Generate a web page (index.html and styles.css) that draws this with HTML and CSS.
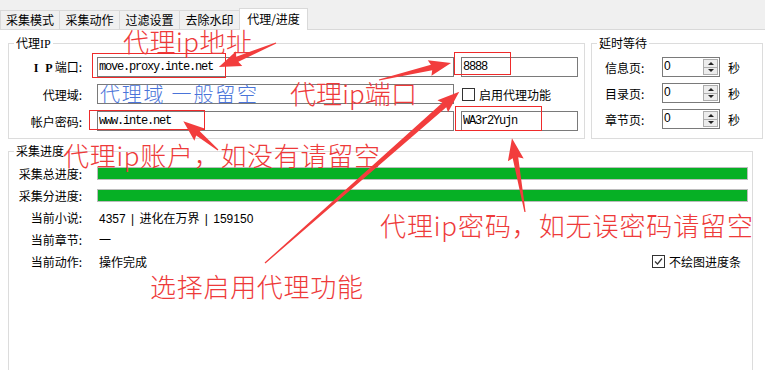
FILE: index.html
```html
<!DOCTYPE html>
<html lang="zh-CN">
<head>
    <meta charset="UTF-8">
    <meta name="viewport" content="width=device-width, initial-scale=1.0">
    <title>代理/进度</title>
    <link rel="stylesheet" href="styles.css">
</head>
<body>
    <div class="tabs">
        <div class="tab first">采集模式</div>
        <div class="tab">采集动作</div>
        <div class="tab">过滤设置</div>
        <div class="tab last">去除水印</div>
        <div class="tab active">代理/进度</div>
    </div>

    <div class="panel">
        <div class="top-row">
            <fieldset class="group proxy">
                <legend>代理<span class="serif">IP</span></legend>
                <div class="proxy-grid">
                    <label class="lbl"><b class="ip">I P</b>端口:</label>
                    <input class="box" type="text" value="move.proxy.inte.net">
                    <input class="box" type="text" value="8888">

                    <label class="lbl">代理域:</label>
                    <input class="box" type="text" value="">
                    <label class="check enable"><span class="cb"></span>启用代理功能</label>

                    <label class="lbl">帐户密码:</label>
                    <input class="box" type="text" value="www.inte.net">
                    <input class="box" type="text" value="WA3r2Yujn">
                </div>
            </fieldset>

            <fieldset class="group delay">
                <legend>延时等待</legend>
                <div class="delay-grid">
                    <span class="lbl">信息页:</span>
                    <div class="spin"><span class="spin-val">0</span><span class="spin-btns"><i class="up"></i><i class="down"></i></span></div>
                    <span class="unit">秒</span>

                    <span class="lbl">目录页:</span>
                    <div class="spin"><span class="spin-val">0</span><span class="spin-btns"><i class="up"></i><i class="down"></i></span></div>
                    <span class="unit">秒</span>

                    <span class="lbl">章节页:</span>
                    <div class="spin"><span class="spin-val">0</span><span class="spin-btns"><i class="up"></i><i class="down"></i></span></div>
                    <span class="unit">秒</span>
                </div>
            </fieldset>
        </div>

        <fieldset class="group progress">
            <legend>采集进度</legend>
            <div class="progress-grid">
                <span class="lbl">采集总进度:</span>
                <div class="bar"><div class="fill" style="width:100%"></div></div>

                <span class="lbl">采集分进度:</span>
                <div class="bar"><div class="fill" style="width:100%"></div></div>

                <span class="lbl">当前小说:</span>
                <span class="val">4357 | 进化在万界 | 159150</span>

                <span class="lbl">当前章节:</span>
                <span class="val">一</span>

                <span class="lbl">当前动作:</span>
                <div class="val last-row">
                    <span>操作完成</span>
                    <label class="check nodraw">
                        <span class="cb checked"><svg width="11" height="11" viewBox="0 0 11 11"><polyline points="2,5.5 4.5,8 9,2.5" fill="none" stroke="#333" stroke-width="1.2"/></svg></span>不绘图进度条
                    </label>
                </div>
            </div>
        </fieldset>
    </div>

    <!-- red/blue notes drawn over the dialog -->
    <svg class="notes" width="765" height="370" viewBox="0 0 765 370">
        <g class="marks">
            <rect x="92.5" y="53.5" width="133" height="24"/>
            <rect x="89.5" y="110.5" width="115" height="19"/>
            <rect x="454.5" y="52.5" width="56" height="22"/>
            <rect x="455.5" y="106.5" width="86" height="24"/>
        </g>
        <g class="arrows">
            <polygon transform="translate(276 43) rotate(157.2)" points="0,-0.6 42,-2.8 40,-8 62,0 40,8 42,2.8 0,0.6"/>
            <polygon transform="translate(379 80) rotate(-13.3)" points="0,-0.6 54,-2.8 52,-8 74,0 52,8 54,2.8 0,0.6"/>
            <polygon transform="translate(265 263) rotate(-41.4)" points="0,-0.6 239,-3 237,-8 259,0 237,8 239,3 0,0.6"/>
            <polygon transform="translate(218 150) rotate(-140.4)" points="0,-0.6 26,-2.8 24,-8 45,0 24,8 26,2.8 0,0.6"/>
            <polygon transform="translate(525 212) rotate(-100)" points="0,-0.6 55,-2.8 53,-8 75,0 53,8 55,2.8 0,0.6"/>
        </g>
        <text class="note" x="123" y="52" textLength="129" lengthAdjust="spacing">代理ip地址</text>
        <text class="note" x="290" y="104" textLength="127" lengthAdjust="spacing">代理ip端口</text>
        <text class="note" x="63" y="166" textLength="317" lengthAdjust="spacing">代理ip账户，如没有请留空</text>
        <text class="note" x="380" y="236" textLength="373" lengthAdjust="spacing">代理ip密码，如无误密码请留空</text>
        <text class="note" x="150" y="297" textLength="213" lengthAdjust="spacing">选择启用代理功能</text>
        <text class="note blue" x="100" y="102" textLength="157" lengthAdjust="spacing">代理域 一般留空</text>
    </svg>
</body>
</html>
```

FILE: styles.css
```css
body {
    margin: 0;
    width: 765px;
    height: 370px;
    overflow: hidden;
    position: relative;
    background-color: #fff;
    color: #000;
    font-family: "Noto Sans CJK SC", sans-serif;
    font-size: 12px;
}

/* tab strip */
.tabs {
    display: flex;
    align-items: flex-end;
    height: 29px;
    background-color: #f0f0f0;
    border-bottom: 1px solid #d9d9d9;
}
.tab {
    box-sizing: border-box;
    width: 60px;
    height: 19px;
    line-height: 18px;
    text-align: center;
    border-top: 1px solid #d9d9d9;
    border-right: 1px solid #d9d9d9;
}
.tab.first {
    border-left: 1px solid #d9d9d9;
}
.tab.last {
    width: 59px;
    border-right: none;
}
.tab.active {
    width: 69px;
    height: 22px;
    line-height: 20px;
    margin-bottom: -1px;
    background-color: #fff;
    border-left: 1px solid #d9d9d9;
}

.panel {
    padding: 6px 0 0 8px;
}
.top-row {
    display: flex;
    gap: 6px;
}

/* group boxes */
.group {
    margin: 0;
    padding: 0;
    min-width: 0;
    box-sizing: border-box;
    border: 1px solid #dcdcdc;
}
.group legend {
    margin-left: 5px;
    padding: 0 2px;
    line-height: 14px;
}
.serif {
    font-family: "Liberation Serif", serif;
}
.proxy {
    width: 577px;
}
.delay {
    width: 172px;
}
.progress {
    width: 745px;
    height: 240px;
    margin-top: 5px;
}

.lbl {
    text-align: right;
    padding-right: 8px;
    white-space: nowrap;
}
.ip {
    font-family: "Liberation Serif", serif;
    letter-spacing: 2px;
}

.proxy-grid {
    display: grid;
    grid-template-columns: 81px 357px 117px;
    grid-auto-rows: 20px;
    column-gap: 7px;
    row-gap: 7px;
    align-items: center;
    padding: 6px 0 7px 0;
}
.box {
    box-sizing: border-box;
    width: 100%;
    height: 20px;
    margin: 0;
    padding: 0 1px;
    border: 1px solid #7a7a7a;
    background-color: #fff;
    color: #000;
    outline: none;
    font-family: "Liberation Mono", monospace;
    font-size: 12px;
    letter-spacing: -1.2px;
}

.check {
    display: flex;
    align-items: center;
    gap: 4px;
    white-space: nowrap;
}
.check.enable {
    margin-left: 1px;
}
.cb {
    box-sizing: border-box;
    width: 13px;
    height: 13px;
    border: 1px solid #333;
    background-color: #fff;
    display: flex;
}

/* delay spinners */
.delay-grid {
    display: grid;
    grid-template-columns: 57px 58px auto;
    grid-auto-rows: 20px;
    row-gap: 6px;
    align-items: center;
    padding: 7px 0 7px 13px;
}
.delay-grid .lbl {
    text-align: left;
    padding: 0;
}
.unit {
    margin-left: 8px;
}
.spin {
    box-sizing: border-box;
    height: 20px;
    display: flex;
    border: 1px solid #7a7a7a;
    background-color: #fff;
}
.spin-val {
    flex: 1;
    padding-left: 1px;
    line-height: 17px;
    font-family: "Liberation Sans", sans-serif;
}
.spin-btns {
    box-sizing: border-box;
    width: 15px;
    margin: 1px 1px 1px 0;
    display: flex;
    flex-direction: column;
    border: 1px solid #adadad;
    background-color: #ececec;
}
.spin-btns i {
    flex: 1;
    display: flex;
    align-items: center;
    justify-content: center;
}
.spin-btns .up {
    border-bottom: 1px solid #adadad;
}
.spin-btns .up::after,
.spin-btns .down::after {
    content: "";
    border-left: 3px solid transparent;
    border-right: 3px solid transparent;
}
.spin-btns .up::after {
    border-bottom: 3px solid #222;
}
.spin-btns .down::after {
    border-top: 3px solid #222;
}

/* progress */
.progress-grid {
    display: grid;
    grid-template-columns: 81px 651px;
    grid-auto-rows: 22px;
    column-gap: 7px;
    align-items: center;
    padding-top: 4px;
}
.bar {
    box-sizing: border-box;
    height: 13px;
    border: 1px solid #bcbcbc;
    background-color: #e6e6e6;
}
.fill {
    height: 100%;
    background-color: #06b025;
}
.val {
    padding-left: 2px;
    font-family: "Liberation Sans", "Noto Sans CJK SC", sans-serif;
    word-spacing: 2px;
}
.last-row {
    display: flex;
    align-items: center;
    font-family: "Noto Sans CJK SC", sans-serif;
    word-spacing: 0;
}
.check.nodraw {
    margin-left: auto;
    margin-right: 7px;
}

/* annotations */
.notes {
    position: absolute;
    top: 0;
    left: 0;
    pointer-events: none;
}
.marks rect {
    fill: none;
    stroke: #ef2b2b;
    stroke-width: 1;
}
.arrows polygon {
    fill: #f23d3d;
}
.note {
    fill: #ee3a3a;
    font-family: "Noto Sans CJK SC", sans-serif;
    font-size: 26px;
    font-weight: 300;
}
.note.blue {
    fill: #4a74d9;
    font-size: 20px;
}
```
